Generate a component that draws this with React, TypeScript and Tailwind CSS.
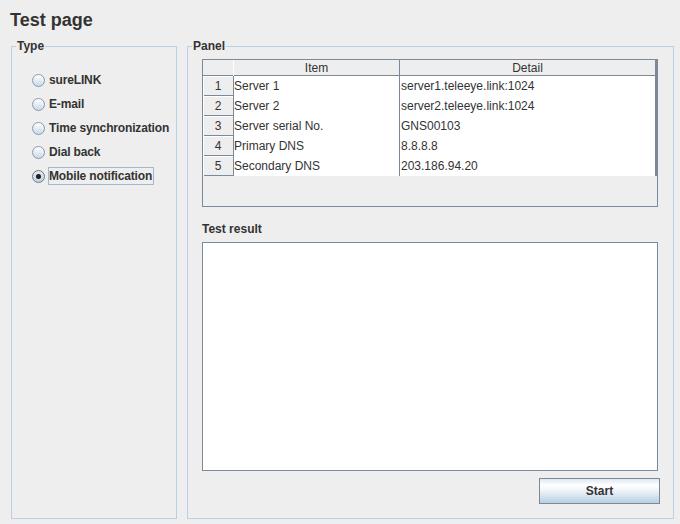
import React from "react";

const rows = [
  ["1", "Server 1", "server1.teleeye.link:1024"],
  ["2", "Server 2", "server2.teleeye.link:1024"],
  ["3", "Server serial No.", "GNS00103"],
  ["4", "Primary DNS", "8.8.8.8"],
  ["5", "Secondary DNS", "203.186.94.20"],
];

const types = ["sureLINK", "E-mail", "Time synchronization", "Dial back", "Mobile notification"];

function Radio({ checked }: { checked: boolean }) {
  return (
    <div
      className={
        "w-[13px] h-[13px] rounded-full border flex items-center justify-center " +
        (checked
          ? "border-[#6b7a89] bg-[linear-gradient(to_bottom,#e4ebf2,#c3d2e1)]"
          : "border-[#8a99a8] bg-[linear-gradient(to_bottom,#ffffff,#c9d8e8)]")
      }
    >
      {checked && <div className="w-[5px] h-[5px] rounded-full bg-[#1e1e1e]" />}
    </div>
  );
}

export default function App() {
  return (
    <div className="w-[680px] h-[524px] bg-[#eeeeee] font-['Liberation_Sans',Arial,sans-serif] text-[#333333] flex flex-col overflow-hidden">
      <div className="pt-[10px] pl-[10px] text-[18px] leading-[21px] font-bold">Test page</div>
      <div className="flex mt-[8px] pl-[11px] gap-[10px] h-[480px]">
        <fieldset className="w-[166px] h-[480px] border border-[#b8cfe5] m-0 p-0 min-w-0">
          <legend className="ml-[4px] px-px text-[12px] leading-[15px] font-bold">Type</legend>
          <div className="pt-[14px] pl-[20px] flex flex-col">
            {types.map((t, i) => (
              <div key={t} className="h-[24px] flex items-center">
                <Radio checked={i === 4} />
                <span
                  className={
                    "ml-[3px] border pr-px text-[12px] leading-[16px] font-bold whitespace-nowrap tracking-[-0.15px] " +
                    (i === 4 ? "border-[#a3b8cc]" : "border-transparent")
                  }
                >
                  {t}
                </span>
              </div>
            ))}
          </div>
        </fieldset>
        <fieldset className="w-[487px] h-[480px] border border-[#b8cfe5] m-0 p-0 min-w-0">
          <legend className="ml-[4px] px-px text-[12px] leading-[15px] font-bold">Panel</legend>
          <div className="pl-[14px] pt-[5px]">
            <div className="w-[458px] flex flex-col">
              <div className="w-[456px] h-[148px] border border-[#7a8a99] bg-[#eeeeee] flex flex-col text-[12px]">
                <div className="grid grid-cols-[31px_166px_257px] h-[16px] border-b border-[#7a8a99] leading-[16px]">
                  <div className="border-r border-white" />
                  <div className="border-r border-[#7a8a99] text-center">Item</div>
                  <div className="border-r-2 border-[#7a8a99] text-center">Detail</div>
                </div>
                {rows.map((r) => (
                  <div key={r[0]} className="grid grid-cols-[31px_166px_257px] h-[20px] border-b border-[#7a8a99] leading-[20px]">
                    <div className="border-r border-[#7a8a99] text-center shadow-[inset_0_1px_0_#ffffff,inset_1px_0_0_#ffffff]">{r[0]}</div>
                    <div className="bg-white border-r border-[#7a8a99] whitespace-nowrap">{r[1]}</div>
                    <div className="bg-white border-r-2 border-[#7a8a99] pl-px whitespace-nowrap">{r[2]}</div>
                  </div>
                ))}
              </div>
              <div className="mt-[14px] text-[12px] leading-[16px] font-bold">Test result</div>
              <div className="mt-[5px] w-[456px] h-[229px] border border-[#7a8a99] bg-white" />
              <button className="mt-[7px] self-end w-[121px] h-[26px] border border-[#7a8a99] bg-[linear-gradient(to_bottom,#dde8f3_0%,#ffffff_25%,#f2f6fa_45%,#b8cfe5_100%)] text-[12px] font-bold text-[#333333] leading-[15px]">
                Start
              </button>
            </div>
          </div>
        </fieldset>
      </div>
    </div>
  );
}
